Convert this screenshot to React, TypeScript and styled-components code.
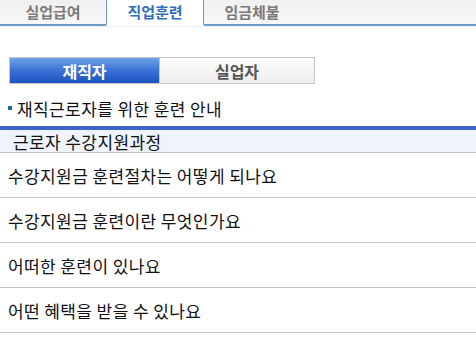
import React from 'react';
import styled, { createGlobalStyle } from 'styled-components';

const GlobalStyle = createGlobalStyle`
  body {
    margin: 0;
    background: #ffffff;
    font-family: "Noto Sans CJK KR", "Noto Sans", sans-serif;
    color: #111;
  }
`;

const Page = styled.div`
  width: 476px;
`;

const TabBar = styled.div`
  display: flex;
  height: 26px;
  background: linear-gradient(#f0f0f0, #f8f8f8);
  box-shadow: 0 1px 0 #eef2f6, 0 2px 0 #ffffff;
`;

const Tab = styled.div<{ $active?: boolean; $width: number }>`
  width: ${({ $width }) => $width}px;
  box-sizing: border-box;
  display: flex;
  align-items: center;
  justify-content: center;
  padding-bottom: 2px;
  font-size: 15px;
  font-weight: 700;
  color: ${({ $active }) => ($active ? '#2f6fc0' : '#7a7a7a')};
  background: ${({ $active }) => ($active ? '#ffffff' : 'transparent')};
  border-bottom: ${({ $active }) => ($active ? '2px solid #ffffff' : '2px solid #6d9cc5')};
  border-left: ${({ $active }) => ($active ? '1px solid #6d9cc5' : 'none')};
  border-right: ${({ $active }) => ($active ? '1px solid #6d9cc5' : 'none')};
`;

const TabFill = styled.div`
  flex: 1;
  border-bottom: 2px solid #6d9cc5;
`;

const SubTabs = styled.div`
  display: flex;
  margin: 31px 0 0 9px;
`;

const SubTab = styled.div<{ $active?: boolean }>`
  width: 151px;
  height: 27px;
  box-sizing: border-box;
  border: 1px solid #c6c6c6;
  display: flex;
  align-items: center;
  justify-content: center;
  font-size: 16px;
  font-weight: 700;
  color: ${({ $active }) => ($active ? '#ffffff' : '#555555')};
  background: ${({ $active }) =>
    $active ? 'linear-gradient(#6fa2ea, #3a72d6 50%, #1d52bd)' : 'linear-gradient(#ffffff, #ececec)'};
  & + & {
    width: 155px;
    border-left: none;
  }
`;

const Heading = styled.div`
  display: flex;
  align-items: center;
  gap: 5px;
  height: 24px;
  margin: 12px 0 0 8px;
  font-size: 17px;
  letter-spacing: 0.4px;
  color: #111;
`;

const Bullet = styled.span`
  width: 4px;
  height: 4px;
  background: #1d6b9a;
`;

const SectionTitle = styled.div`
  margin-top: 6px;
  border-top: 4px solid #3b66c4;
  border-bottom: 1px solid #c6c6c6;
  background: #eef3fc;
  height: 22px;
  padding-left: 13px;
  display: flex;
  align-items: center;
  font-size: 17px;
  letter-spacing: 0.4px;
  color: #111;
`;

const Row = styled.div`
  height: 44px;
  border-bottom: 1px solid #c6c6c6;
  padding-left: 8px;
  display: flex;
  align-items: center;
  font-size: 17px;
  letter-spacing: 0.4px;
  color: #111;
`;

const items = [
  '수강지원금 훈련절차는 어떻게 되나요',
  '수강지원금 훈련이란 무엇인가요',
  '어떠한 훈련이 있나요',
  '어떤 혜택을 받을 수 있나요',
];

export default function App() {
  return (
    <Page>
      <GlobalStyle />
      <TabBar>
        <Tab $width={106}>실업급여</Tab>
        <Tab $width={98} $active>직업훈련</Tab>
        <Tab $width={96}>임금체불</Tab>
        <TabFill />
      </TabBar>
      <SubTabs>
        <SubTab $active>재직자</SubTab>
        <SubTab>실업자</SubTab>
      </SubTabs>
      <Heading>
        <Bullet />
        재직근로자를 위한 훈련 안내
      </Heading>
      <SectionTitle>근로자 수강지원과정</SectionTitle>
      {items.map((item) => (
        <Row key={item}>{item}</Row>
      ))}
    </Page>
  );
}
